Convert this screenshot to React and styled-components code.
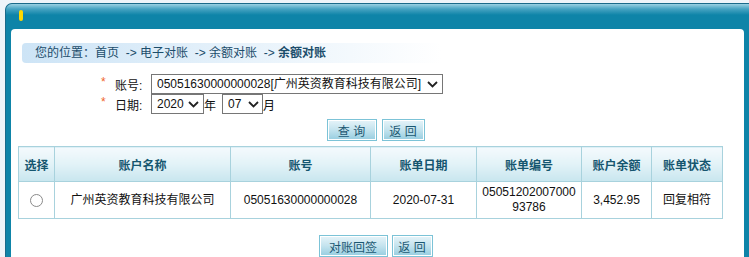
import React from "react";
import styled, { createGlobalStyle } from "styled-components";

const GlobalStyle = createGlobalStyle`
  body {
    margin: 0;
    background: #eef4f9;
    font-family: "Liberation Sans", "Noto Sans CJK SC", sans-serif;
    font-size: 12px;
    color: #111;
  }
`;

const Page = styled.div`
  height: 257px;
  box-sizing: border-box;
  padding: 3px 0 0 5px;
  overflow: hidden;
`;

const Frame = styled.div`
  height: 100%;
  display: flex;
  flex-direction: column;
  background: #0e84a8;
  border-top: 1px solid #1a6a8a;
  border-left: 1px solid #1a6a8a;
  border-top-left-radius: 7px;
  padding: 0 5px;
`;

const Header = styled.div`
  height: 25px;
  margin: 0 -5px;
  padding-left: 13px;
  border-top-left-radius: 6px;
  background: linear-gradient(#9ad1e3 0, #46a3c2 5px, #0e84a8 11px, #0e84a8);
  flex-shrink: 0;
`;

const Pill = styled.div`
  width: 4px;
  height: 11px;
  margin-top: 6px;
  border-radius: 2px;
  background: #ffd800;
`;

const Panel = styled.div`
  flex: 1;
  background: #fff;
  border-radius: 4px 4px 0 0;
  display: flex;
  flex-direction: column;
`;

const Crumb = styled.div`
  margin: 14px 0 0 11px;
  width: 420px;
  height: 20px;
  line-height: 20px;
  padding-left: 13px;
  box-sizing: border-box;
  border-radius: 4px 0 0 4px;
  background: linear-gradient(to right, #cde4f6, #e3f0fa 45%, #ffffff);
  color: #1b4d6b;
  white-space: nowrap;

  b {
    font-weight: bold;
  }
`;

const Form = styled.div`
  margin-top: 11px;
  padding-left: 90px;
`;

const Row = styled.div`
  display: flex;
  align-items: center;
  height: 20px;
`;

const Star = styled.span`
  width: 14px;
  color: #f0652a;
  align-self: flex-start;
  line-height: 16px;
`;

const Label = styled.span`
  width: 36px;
  white-space: nowrap;
`;

const Unit = styled.span`
  margin-right: ${(p) => p.$gap || 0}px;
`;

const SelectWrap = styled.div`
  position: relative;
  width: ${(p) => p.$w}px;
  height: 20px;
  box-sizing: border-box;
  border: 1px solid #767676;
  background: #fff;
`;

const Select = styled.select`
  appearance: none;
  border: none;
  outline: none;
  background: transparent;
  width: 100%;
  height: 100%;
  padding: 0 0 0 5px;
  margin: 0;
  font: inherit;
  color: #111;
`;

const Chevron = styled.svg`
  position: absolute;
  right: ${(p) => p.$r || 4}px;
  top: 6px;
  pointer-events: none;
`;

const Buttons = styled.div`
  display: flex;
  justify-content: center;
  gap: ${(p) => p.$gap}px;
  margin-top: ${(p) => p.$top}px;
  padding-right: 4px;
`;

const Button = styled.button`
  width: ${(p) => p.$w}px;
  height: 22px;
  padding: 0;
  border: 1px solid #7cc3d7;
  box-shadow: inset 0 0 0 1px #fff;
  background: linear-gradient(#e6f4f9, #c3e3ee 50%, #96cde0);
  color: #1b5872;
  font: inherit;
  font-size: 12px;
  cursor: pointer;
`;

const Table = styled.table`
  margin: 5px 0 0 7px;
  width: 704px;
  table-layout: fixed;
  border-collapse: collapse;
`;

const Th = styled.th`
  height: 34px;
  padding: 0;
  border: 1px solid #a8d2dd;
  background: linear-gradient(#f4fafd, #e2f2f7 50%, #c8e6ef);
  color: #15566f;
  font-weight: bold;
  font-size: 12px;
`;

const Td = styled.td`
  height: 36px;
  padding: 0 4px;
  border: 1px solid #a8d2dd;
  text-align: center;
  line-height: 15px;
  word-break: break-all;
`;

const Radio = styled.input`
  appearance: none;
  width: 13px;
  height: 13px;
  margin: 0;
  border: 1px solid #8a8a8a;
  border-radius: 50%;
  background: #fff;
  vertical-align: middle;
`;

function Down({ r }) {
  return (
    <Chevron $r={r} width="11" height="7" viewBox="0 0 11 7">
      <path d="M1 1 L5.5 5.5 L10 1" fill="none" stroke="#222" strokeWidth="1.8" />
    </Chevron>
  );
}

const cols = [36, 176, 140, 106, 105, 70, 71];
const heads = ["选择", "账户名称", "账号", "账单日期", "账单编号", "账户余额", "账单状态"];

export default function App() {
  return (
    <>
      <GlobalStyle />
      <Page>
        <Frame>
          <Header>
            <Pill />
          </Header>
          <Panel>
            <Crumb>
              您的位置：首页{"\u00a0 -> "}电子对账{"\u00a0 -> "}余额对账{"\u00a0 -> "}
              <b>余额对账</b>
            </Crumb>

            <Form>
              <Row>
                <Star>*</Star>
                <Label>账号:</Label>
                <SelectWrap $w={292}>
                  <Select defaultValue="a">
                    <option value="a">05051630000000028[广州英资教育科技有限公司]</option>
                  </Select>
                  <Down r={4} />
                </SelectWrap>
              </Row>
              <Row>
                <Star>*</Star>
                <Label>日期:</Label>
                <SelectWrap $w={53}>
                  <Select defaultValue="2020">
                    <option value="2020">2020</option>
                  </Select>
                  <Down r={4} />
                </SelectWrap>
                <Unit $gap={6}>年</Unit>
                <SelectWrap $w={41}>
                  <Select defaultValue="07">
                    <option value="07">07</option>
                  </Select>
                  <Down r={3} />
                </SelectWrap>
                <Unit>月</Unit>
              </Row>
            </Form>

            <Buttons $gap={5} $top={5}>
              <Button $w={50}>查 询</Button>
              <Button $w={43}>返 回</Button>
            </Buttons>

            <Table>
              <colgroup>
                {cols.map((w, i) => (
                  <col key={i} style={{ width: w }} />
                ))}
              </colgroup>
              <thead>
                <tr>
                  {heads.map((h) => (
                    <Th key={h}>{h}</Th>
                  ))}
                </tr>
              </thead>
              <tbody>
                <tr>
                  <Td>
                    <Radio type="radio" name="bill" />
                  </Td>
                  <Td>广州英资教育科技有限公司</Td>
                  <Td>05051630000000028</Td>
                  <Td>2020-07-31</Td>
                  <Td>0505120200700093786</Td>
                  <Td>3,452.95</Td>
                  <Td>回复相符</Td>
                </tr>
              </tbody>
            </Table>

            <Buttons $gap={4} $top={16}>
              <Button $w={69}>对账回签</Button>
              <Button $w={41}>返 回</Button>
            </Buttons>
          </Panel>
        </Frame>
      </Page>
    </>
  );
}
